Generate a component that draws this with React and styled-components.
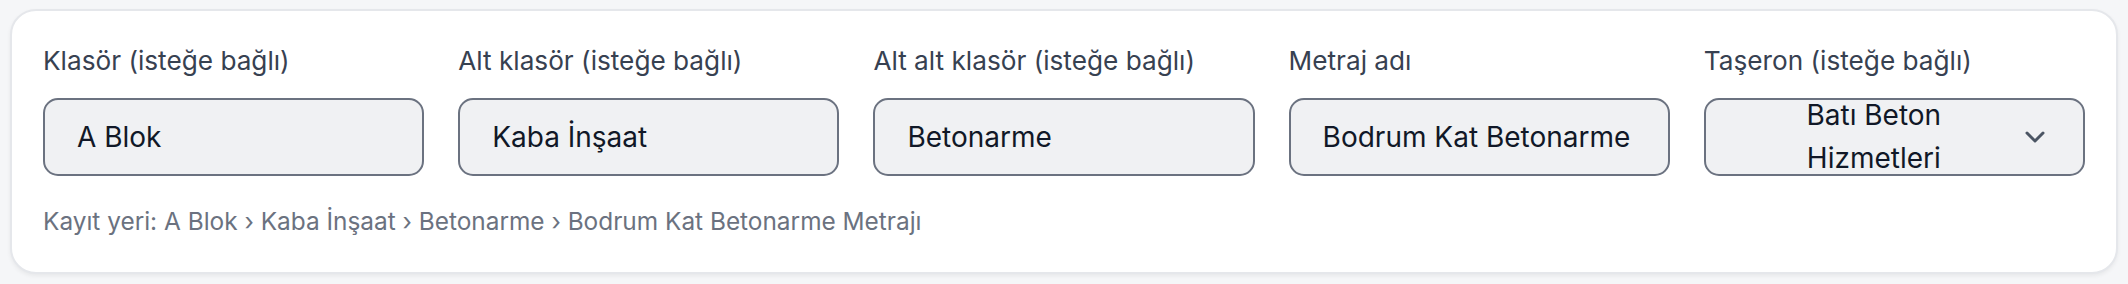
import React from "react";
import styled, { createGlobalStyle } from "styled-components";

const GlobalStyle = createGlobalStyle`
  html, body {
    margin: 0;
    padding: 0;
    background: #f5f6f8;
    font-family: "Inter", "Noto Sans", sans-serif;
  }
`;

const Page = styled.div`
  padding: 9px 10px;
`;

const Card = styled.section`
  background: #ffffff;
  border: 2px solid #e5e7eb;
  border-radius: 26px;
  box-shadow: 0 2px 4px rgba(0, 0, 0, 0.06);
  padding: 32px 31px 24px 31px;
  box-sizing: border-box;
  height: 265px;
`;

const FieldGrid = styled.div`
  display: grid;
  grid-template-columns: repeat(5, 1fr);
  column-gap: 34px;
`;

const Field = styled.label`
  display: flex;
  flex-direction: column;
  gap: 19px;
`;

const Label = styled.span`
  font-size: 26.2px;
  line-height: 36px;
  color: #374151;
  white-space: nowrap;
`;

const Box = styled.div`
  height: 78px;
  box-sizing: border-box;
  border: 2px solid #6b7280;
  border-radius: 15px;
  background: #f0f1f3;
  color: #111827;
  font-size: 28px;
  white-space: nowrap;
  display: flex;
  align-items: center;
  padding: 0 ${(p) => (p.$select ? "38px" : "32px")} 0 32px;
`;

const SelectText = styled.span`
  width: 272px;
  flex: none;
  text-align: center;
  line-height: 43px;
  white-space: normal;
`;

const Chevron = styled.svg`
  width: 20px;
  height: 12px;
  flex: none;
  margin-left: auto;
  color: #4b5563;
`;

const Path = styled.p`
  margin: 28px 0 0 0;
  font-size: 24.4px;
  line-height: 34px;
  color: #6b7280;
`;

const fields = [
  { label: "Klasör (isteğe bağlı)", value: "A Blok" },
  { label: "Alt klasör (isteğe bağlı)", value: "Kaba İnşaat" },
  { label: "Alt alt klasör (isteğe bağlı)", value: "Betonarme" },
  { label: "Metraj adı", value: "Bodrum Kat Betonarme" },
];

export default function App() {
  return (
    <>
      <GlobalStyle />
      <Page>
        <Card>
          <FieldGrid>
            {fields.map((f) => (
              <Field key={f.label}>
                <Label>{f.label}</Label>
                <Box>{f.value}</Box>
              </Field>
            ))}
            <Field>
              <Label>Taşeron (isteğe bağlı)</Label>
              <Box $select>
                <SelectText>Batı Beton Hizmetleri</SelectText>
                <Chevron viewBox="0 0 20 12" fill="none">
                  <polyline
                    points="2,2 10,10 18,2"
                    stroke="currentColor"
                    strokeWidth="3"
                    strokeLinecap="round"
                    strokeLinejoin="round"
                  />
                </Chevron>
              </Box>
            </Field>
          </FieldGrid>
          <Path>
            Kayıt yeri: A Blok › Kaba İnşaat › Betonarme › Bodrum Kat Betonarme Metrajı
          </Path>
        </Card>
      </Page>
    </>
  );
}
